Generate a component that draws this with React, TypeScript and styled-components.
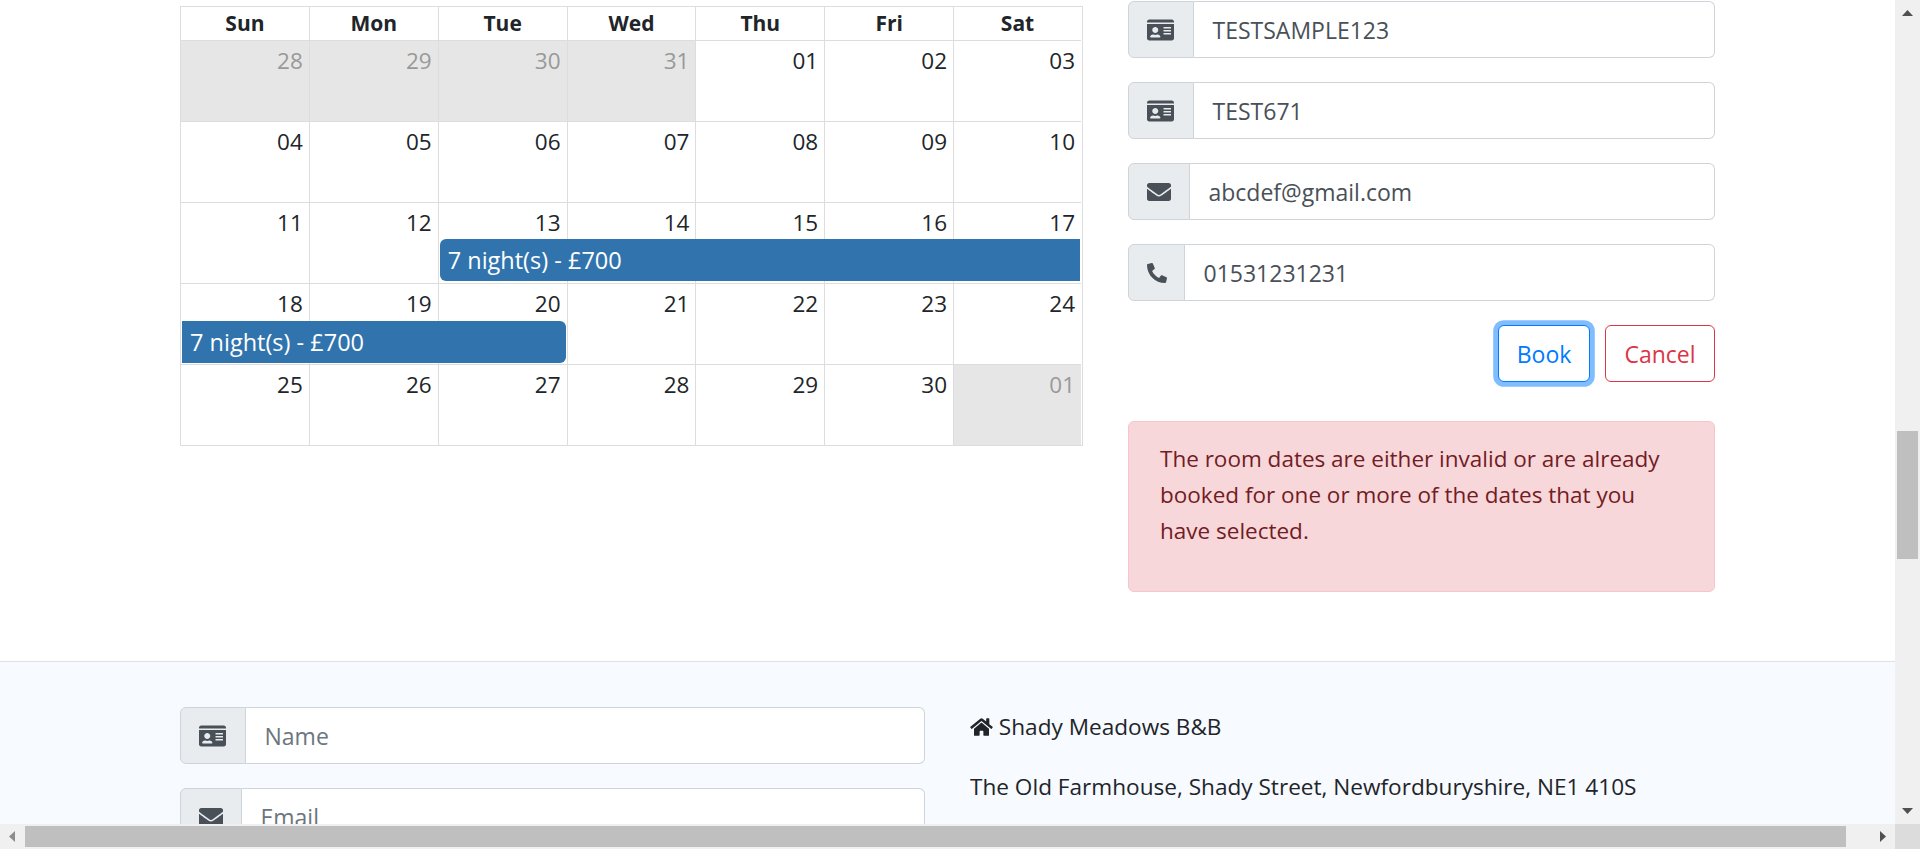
import React from "react";
import styled, { createGlobalStyle } from "styled-components";
import { FaHome, FaIdCard, FaEnvelope, FaPhone } from "react-icons/fa";

const Global = createGlobalStyle`
  html, body { margin: 0; padding: 0; height: 849px; overflow: hidden; background: #fff; }
  * { box-sizing: border-box; }
  body { font-family: "Open Sans", "Noto Sans", sans-serif; color: #212529; }
`;
const Page = styled.div`
  width: 1920px; height: 849px; overflow: hidden; position: relative;
  padding-top: 1px;
`;
const Upper = styled.div`
  display: flex; align-items: flex-start; padding-left: 180px; height: 660px;
`;
const Calendar = styled.div`
  margin-top: 5px; width: 903px; display: grid; grid-template-columns: repeat(6, 128.857px) 1fr;
  border: 1px solid #ddd; border-left: 0; padding-right: 1px;
`;
const Head = styled.div`
  height: 33px; font-weight: 700; font-size: 21px; line-height: 33px; text-align: center;
  border-left: 1px solid #ddd;
`;
const Cell = styled.div<{ $off?: boolean }>`
  height: 81px; position: relative; text-align: right; font-size: 22.5px; line-height: 30px;
  padding: 5px 6px 0 0; border-top: 1px solid #ddd; border-left: 1px solid #ddd;
  background: ${p => (p.$off ? "#e6e6e6" : "transparent")};
  color: ${p => (p.$off ? "#999" : "#212529")};
`;
const Booking = styled.div<{ $cols: number; $top: number; $left?: boolean; $right?: boolean }>`
  position: absolute; z-index: 2; left: 1px; top: ${p => p.$top}px; height: 42px;
  width: ${p => p.$cols}px; background: #3174ad; color: #fff;
  font-size: 23.5px; line-height: 42px; padding-left: 8px; text-align: left; white-space: nowrap;
  border-radius: ${p => (p.$left ? "6px" : "0")} ${p => (p.$right ? "6px" : "0")} ${p => (p.$right ? "6px" : "0")} ${p => (p.$left ? "6px" : "0")};
`;
const Side = styled.div`
  margin-left: 45px; width: 587px; display: flex; flex-direction: column;
`;
const Group = styled.div`
  display: flex; height: 57px; margin-bottom: 24px; width: 100%;
`;
const Addon = styled.div<{ $w: number }>`
  width: ${p => p.$w}px; flex: none; background: #e9ecef; border: 1px solid #ced4da;
  border-radius: 6px 0 0 6px; color: #495057; display: flex; align-items: center;
  padding-left: 18px;
`;
const CardIcon = styled(FaIdCard)` width: 27px; height: 24px; `;
const MailIcon = styled(FaEnvelope)` width: 24px; height: 24px; `;
const PhoneIcon = styled(FaPhone)` width: 20px; height: 20px; transform: scaleX(-1); `;
const HomeIcon = styled(FaHome)` width: 23px; height: 20px; vertical-align: -2px; `;
const Field = styled.div<{ $ph?: boolean }>`
  flex: 1; background: #fff; border: 1px solid #ced4da; border-left: 0; border-radius: 0 6px 6px 0;
  font-size: 23px; line-height: 56px; padding-left: 18.5px; color: ${p => (p.$ph ? "#6c757d" : "#495057")};
`;
const Actions = styled.div`
  display: flex; justify-content: flex-end; align-items: center; gap: 15px; height: 57px; margin-bottom: 39px;
`;
const Btn = styled.button<{ $danger?: boolean; $focus?: boolean; $w: number }>`
  height: 57px; width: ${p => p.$w}px; padding: 0; background: #fff;
  border: 1px solid ${p => (p.$danger ? "#dc3545" : "#007bff")};
  color: ${p => (p.$danger ? "#dc3545" : "#007bff")}; border-radius: 6px; font: inherit; font-size: 23px;
  ${p => p.$focus && "box-shadow: 0 0 0 4.8px rgba(0,123,255,.5);"}
`;
const Alert = styled.div`
  background: #f8d7da; border: 1px solid #f5c6cb; border-radius: 6px; color: #721c24;
  font-size: 22.5px; line-height: 36px; padding: 19px 30px 0 31px; height: 171px;
`;
const Footer = styled.div`
  border-top: 1px solid #dee2e6; background: #f7faff; height: 190px; display: flex;
  padding: 45px 0 0 180px; align-items: flex-start;
`;
const FootForm = styled.div` width: 745px; `;
const FootInfo = styled.div` margin: 2px 0 0 45px; font-size: 22.6px; `;
const Line = styled.p` margin: 0 0 24px; line-height: 36px; `;
const VBar = styled.div`
  position: absolute; top: 0; right: 0; width: 25px; height: 849px; background: #f0f0f0; z-index: 5;
`;
const VThumb = styled.div`
  position: absolute; left: 2px; top: 431px; width: 21px; height: 128px; background: #bfbfbf;
`;
const HBar = styled.div`
  position: absolute; left: 0; bottom: 0; width: 1895px; height: 25px; background: #f0f0f0; z-index: 5;
`;
const HThumb = styled.div`
  position: absolute; left: 25px; top: 2px; width: 1821px; height: 21px; background: #bfbfbf;
`;
const Corner = styled.div`
  position: absolute; right: 0; bottom: 0; width: 25px; height: 25px; background: #dcdcdc; z-index: 6;
`;
const Arrow = styled.svg<{ $x: number; $y: number; $dim?: boolean }>`
  position: absolute; left: ${p => p.$x}px; top: ${p => p.$y}px; width: 11px; height: 11px;
  fill: ${p => (p.$dim ? "#8c8c8c" : "#505050")};
`;

const days = ["Sun", "Mon", "Tue", "Wed", "Thu", "Fri", "Sat"];
const dates = [
  "28","29","30","31","01","02","03","04","05","06","07","08","09","10",
  "11","12","13","14","15","16","17","18","19","20","21","22","23","24",
  "25","26","27","28","29","30","01",
];
const Off = new Set([0,1,2,3,34]);

export default function App() {
  return (
    <Page>
      <Global />
      <Upper>
        <Calendar>
          {days.map(d => <Head key={d}>{d}</Head>)}
          {dates.map((d, i) => (
            <Cell key={i} $off={Off.has(i)}>
              {d}
              {i === 16 && <Booking $cols={640} $top={36} $left>7 night(s) - £700</Booking>}
              {i === 21 && <Booking $cols={384} $top={37} $right>7 night(s) - £700</Booking>}
            </Cell>
          ))}
        </Calendar>
        <Side>
          <Group><Addon $w={66}><CardIcon /></Addon><Field>TESTSAMPLE123</Field></Group>
          <Group><Addon $w={66}><CardIcon /></Addon><Field>TEST671</Field></Group>
          <Group><Addon $w={62}><MailIcon /></Addon><Field>abcdef@gmail.com</Field></Group>
          <Group><Addon $w={57}><PhoneIcon /></Addon><Field>01531231231</Field></Group>
          <Actions><Btn $focus $w={92}>Book</Btn><Btn $danger $w={110}>Cancel</Btn></Actions>
          <Alert>The room dates are either invalid or are already booked for one or more of the dates that you have selected.</Alert>
        </Side>
      </Upper>
      <Footer>
        <FootForm>
          <Group><Addon $w={66}><CardIcon /></Addon><Field $ph>Name</Field></Group>
          <Group><Addon $w={62}><MailIcon /></Addon><Field $ph>Email</Field></Group>
        </FootForm>
        <FootInfo>
          <Line><HomeIcon /> Shady Meadows B&amp;B</Line>
          <Line>The Old Farmhouse, Shady Street, Newfordburyshire, NE1 410S</Line>
        </FootInfo>
      </Footer>
      <VBar>
        <Arrow $x={7} $y={8} viewBox="0 0 11 11"><path d="M0 8 L5.5 2 L11 8Z" /></Arrow>
        <VThumb />
        <Arrow $x={7} $y={805} viewBox="0 0 11 11"><path d="M0 3 L5.5 9 L11 3Z" /></Arrow>
      </VBar>
      <HBar>
        <Arrow $x={7} $y={7} $dim viewBox="0 0 11 11"><path d="M8 0 L2 5.5 L8 11Z" /></Arrow>
        <HThumb />
        <Arrow $x={1877} $y={7} viewBox="0 0 11 11"><path d="M3 0 L9 5.5 L3 11Z" /></Arrow>
      </HBar>
      <Corner />
    </Page>
  );
}
